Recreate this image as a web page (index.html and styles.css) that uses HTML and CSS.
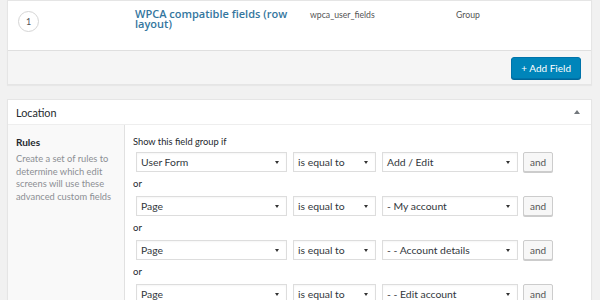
FILE: index.html
```html
<!DOCTYPE html>
<html lang="en">
<head>
    <meta charset="UTF-8">
    <title>Edit Field Group</title>
    <link rel="stylesheet" href="styles.css">
</head>
<body>
    <div class="postbox fields-box">
        <div class="field-row">
            <div class="col-order"><span class="order">1</span></div>
            <div class="col-label"><a href="#">WPCA compatible fields (row layout)</a></div>
            <div class="col-name">wpca_user_fields</div>
            <div class="col-type">Group</div>
        </div>
        <div class="fields-footer">
            <button class="button-primary">+ Add Field</button>
        </div>
    </div>

    <div class="postbox location-box">
        <div class="postbox-header">
            <h2>Location</h2>
            <span class="toggle"></span>
        </div>
        <div class="location-body">
            <div class="rules-label">
                <strong>Rules</strong>
                <p>Create a set of rules to determine which edit screens will use these advanced custom fields</p>
            </div>
            <div class="rules">
                <h4>Show this field group if</h4>
                <div class="rule">
                    <span class="select param">User Form</span>
                    <span class="select operator">is equal to</span>
                    <span class="select value">Add / Edit</span>
                    <button class="button">and</button>
                </div>
                <div class="or">or</div>
                <div class="rule">
                    <span class="select param">Page</span>
                    <span class="select operator">is equal to</span>
                    <span class="select value">- My account</span>
                    <button class="button">and</button>
                </div>
                <div class="or">or</div>
                <div class="rule">
                    <span class="select param">Page</span>
                    <span class="select operator">is equal to</span>
                    <span class="select value">- - Account details</span>
                    <button class="button">and</button>
                </div>
                <div class="or">or</div>
                <div class="rule">
                    <span class="select param">Page</span>
                    <span class="select operator">is equal to</span>
                    <span class="select value">- - Edit account</span>
                    <button class="button">and</button>
                </div>
            </div>
        </div>
    </div>
</body>
</html>
```

FILE: styles.css
```css
body {
    margin: 0;
    padding: 0 8px 0 7px;
    background-color: #f1f1f1;
    font-family: 'Lato', sans-serif;
    font-size: 9.3px;
    color: #444;
}
.postbox {
    background-color: white;
    border: 1px solid #e5e5e5;
    box-shadow: 0 1px 1px rgba(0,0,0,0.04);
}
.fields-box {
    margin-bottom: 14px;
}
.field-row {
    display: grid;
    grid-template-columns: 127px 175px 146px 1fr;
    height: 49px;
    border-bottom: 1px solid #dfdfdf;
}
.col-order {
    padding: 10px 0 0 10px;
}
.order {
    display: flex;
    align-items: center;
    justify-content: center;
    width: 19px;
    height: 19px;
    border: 1px solid #d5d5d5;
    border-radius: 50%;
    font-size: 9px;
    color: #555;
}
.col-label {
    padding: 8px 20px 0 0;
    font-family: 'Open Sans', sans-serif;
    line-height: 10px;
    font-size: 11px;
}
.col-label a {
    color: #34769e;
    font-weight: 600;
    text-decoration: none;
}
.col-name,
.col-type {
    padding-top: 8px;
    font-size: 8.7px;
    color: #555;
}
.fields-footer {
    display: flex;
    justify-content: flex-end;
    height: 33px;
    padding: 6px 10px 0 0;
    box-sizing: border-box;
    background-color: #f5f5f5;
}
.button-primary {
    height: 22px;
    padding: 0 9px;
    background-color: #0085ba;
    border: 1px solid #0073aa;
    border-radius: 3px;
    box-shadow: 0 1px 0 #006799;
    color: white;
    font-family: inherit;
    font-size: 10px;
}
.postbox-header {
    display: flex;
    align-items: center;
    justify-content: space-between;
    height: 24px;
    padding: 0 11px 0 8px;
    border-bottom: 1px solid #eee;
}
.postbox-header h2 {
    margin: 0;
    font-size: 10.8px;
    font-weight: 400;
    color: #23282d;
}
.toggle {
    width: 0;
    height: 0;
    border-left: 3px solid transparent;
    border-right: 3px solid transparent;
    border-bottom: 4px solid #72777c;
}
.location-body {
    display: grid;
    grid-template-columns: 117px 1fr;
}
.rules-label {
    padding: 11px 8px 40px;
    background-color: #f9f9f9;
    border-right: 1px solid #e1e1e1;
}
.rules-label strong {
    display: block;
    color: #23282d;
    font-size: 10px;
    font-weight: 700;
}
.rules-label p {
    margin: 5px 0 0;
    line-height: 12.7px;
    color: #8c8f94;
}
.rules {
    padding: 11px 38px 0 8px;
}
.rules h4 {
    margin: 0 0 5px;
    font-size: 9.3px;
    font-weight: 400;
    color: #23282d;
}
.rule {
    display: flex;
    gap: 6px;
    padding-left: 3px;
}
.select {
    position: relative;
    display: flex;
    align-items: center;
    height: 20px;
    padding-left: 4px;
    box-sizing: border-box;
    border: 1px solid #ddd;
    box-shadow: inset 0 1px 2px rgba(0,0,0,0.04);
    font-size: 10.4px;
    color: #32373c;
}
.select::after {
    content: "";
    position: absolute;
    right: 7px;
    top: 8px;
    border-left: 2px solid transparent;
    border-right: 2px solid transparent;
    border-top: 3px solid #333;
}
.param { width: 151px; }
.operator { width: 83px; }
.value { width: 136px; margin-right: -1px; }
.button {
    width: 30px;
    height: 20px;
    padding: 0;
    background-color: #f7f7f7;
    border: 1px solid #ccc;
    border-radius: 2px;
    box-shadow: 0 1px 0 #ccc;
    color: #555;
    font-family: inherit;
    font-size: 10px;
}
.or {
    height: 24px;
    line-height: 24px;
    font-size: 9.5px;
    color: #23282d;
}
```
